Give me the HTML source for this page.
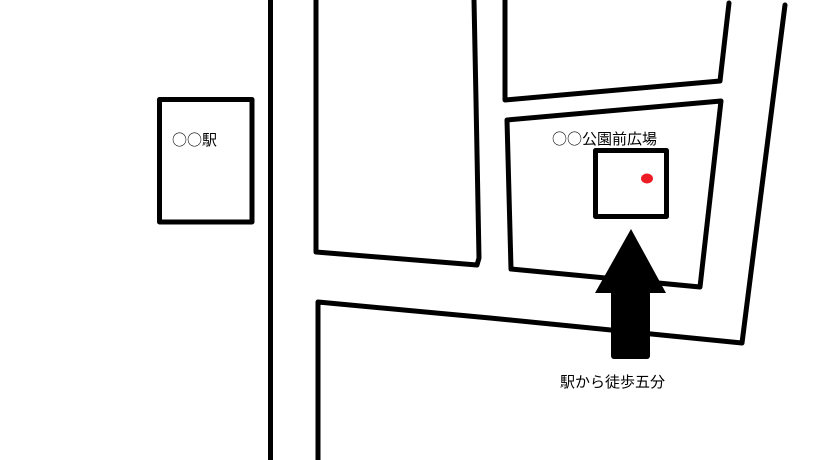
<!DOCTYPE html>
<html><head><meta charset="utf-8"><style>
html,body{margin:0;padding:0;background:#fff;width:819px;height:460px;overflow:hidden}
svg{position:absolute;left:0;top:0}
.t{position:absolute;font-family:"Noto Sans CJK JP",sans-serif;font-size:15px;color:#000;white-space:nowrap;line-height:1}
</style></head><body>
<svg width="819" height="460" viewBox="0 0 819 460">
<g fill="none" stroke="#000" stroke-width="5" stroke-linejoin="round" stroke-linecap="round">
<rect x="159.5" y="99.5" width="92.5" height="122.5"/>
<line x1="270.5" y1="0" x2="270.5" y2="460"/>
<polyline points="316,0 316,252 477,265 479,258 476,100 474,0"/>
<polyline points="318,460 318,302 490,318 742,343 785,5"/>
<polyline points="505,0 505,100 720,81 729,3"/>
<polyline points="507,120 721,101 700,287 511,269 507,120"/>
<rect x="595.5" y="150.5" width="71" height="66"/>
</g>
<ellipse cx="647" cy="178.5" rx="6" ry="5" fill="#ed1c24"/>
<polygon points="631,229 595,293 666,293" fill="#000"/>
<rect x="611" y="285" width="39" height="74" rx="3" fill="#000"/>
</svg>
<div class="t" style="left:172px;top:132px;">○○駅</div>
<div class="t" style="left:552px;top:131px;">○○公園前広場</div>
<div class="t" style="left:560px;top:374px;">駅から徒歩五分</div>
</body></html>
